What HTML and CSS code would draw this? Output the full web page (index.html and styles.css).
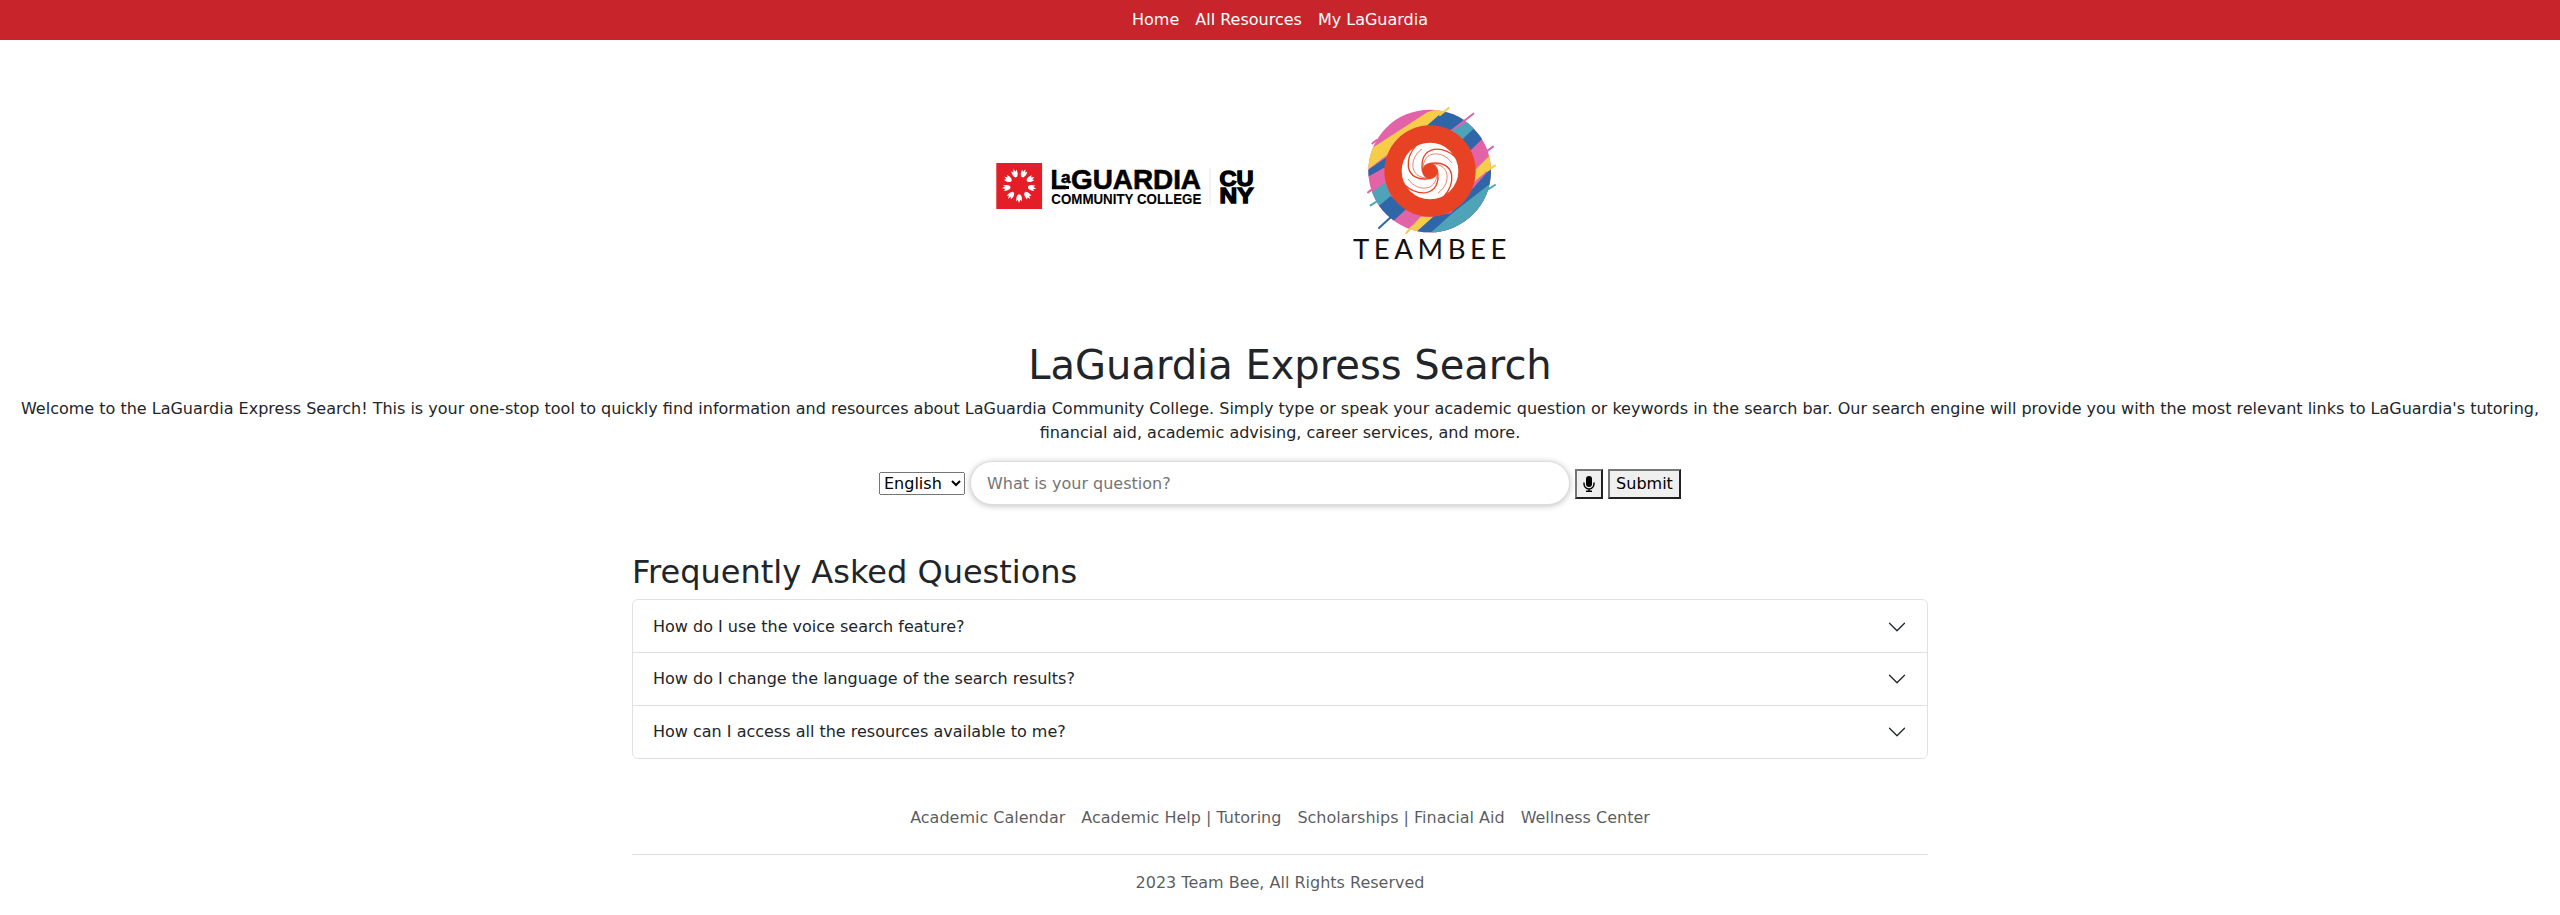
FILE: index.html
```
<!DOCTYPE html>
<html lang="en">
<head>
<meta charset="utf-8">
<title>LaGuardia Express Search</title>
<link rel="stylesheet" href="styles.css">
</head>
<body>
<nav class="topnav">
  <a href="#">Home</a><a href="#">All Resources</a><a href="#">My LaGuardia</a>
</nav>
<header class="logos">
  <svg class="logo-college" viewBox="992 160 268 52" role="img" aria-label="LaGuardia Community College CUNY">
    <rect x="996.3" y="163" width="45.8" height="46" fill="#e31e26"/>
    <defs><path id="petal" d="M-1-9C-3-11-3-13.500-2.600-16L-1.100-14.200L.2-17.400L1.400-14.200L2.800-16C3.200-13.500 3-11 1-9Z" fill="#fff"/></defs>
    <g transform="translate(1019.2 185.500)">
      <use href="#petal" transform="rotate(20)"/><use href="#petal" transform="rotate(60)"/><use href="#petal" transform="rotate(100)"/><use href="#petal" transform="rotate(140)"/><use href="#petal" transform="rotate(180)"/><use href="#petal" transform="rotate(220)"/><use href="#petal" transform="rotate(260)"/><use href="#petal" transform="rotate(300)"/><use href="#petal" transform="rotate(340)"/>
    </g>
    <g class="logo-bold">
      <text x="1050.5" y="188.6" font-size="28" textLength="16" lengthAdjust="spacingAndGlyphs">L</text>
      <text x="1061" y="182.5" font-size="17" textLength="9.5" lengthAdjust="spacingAndGlyphs">a</text>
      <text x="1071" y="188.6" font-size="28" textLength="130" lengthAdjust="spacingAndGlyphs">GUARDIA</text>
      <text class="sub" x="1051.3" y="204" font-size="14.6" textLength="150" lengthAdjust="spacingAndGlyphs">COMMUNITY COLLEGE</text>
      <text class="cuny" x="1219.5" y="185.5" font-size="22" textLength="34" lengthAdjust="spacingAndGlyphs">CU</text>
      <text class="cuny" x="1219.5" y="202.5" font-size="22" textLength="34" lengthAdjust="spacingAndGlyphs">NY</text>
    </g>
    <rect x="1052" y="186" width="17" height="3"/>
    <rect x="1209.5" y="168" width="1.3" height="37" fill="#eee"/>
  </svg>
  <svg class="logo-team" viewBox="1350 100 162 165" role="img" aria-label="Teambee">
    <defs>
      <clipPath id="disc"><circle cx="197" cy="198" r="184"/></clipPath>
      <path id="arm" d="M76-42C54-62 32-67 12-65C-14-60-30-38-22 4"/>
      <path id="thin" d="M66-24C50-46 28-55 6-50C-12-45-23-26-21 0"/>
    </defs>
    <g transform="translate(1364 105) scale(.33333)">
      <g clip-path="url(#disc)">
        <rect width="396" height="396" fill="#e263a8"/>
        <path fill="#f6cd48" d="M0 145L190 22L260 0L215 50L60 157L0 203Z"/>
        <path fill="#2f66a8" d="M0 203L70 155V183L0 222Z"/>
        <path fill="#4fa3b8" d="M0 280L62 233L82 275L30 315Z"/>
        <path fill="#2f66a8" d="M30 315L80 273L127 312L75 360ZM185 65L250 8L304 42L260 75Z"/>
        <path fill="#f6cd48" d="M120 390L170 335H215L155 394Z"/>
        <path fill="#2f66a8" d="M160 378L210 333L260 325L396 172V396H150Z"/>
        <path fill="#4fa3b8" d="M198 385L265 325L396 222V396H190ZM255 82L318 45L335 72L294 108Z"/>
        <path fill="#2f66a8" d="M290 108L328 72L357 100L320 136Z"/>
        <path fill="#f6cd48" d="M328 200L381 148L396 175L326 235Z"/>
      </g>
      <g fill="none" stroke-linecap="round" stroke-width="6">
        <path stroke="#e263a8" d="M300 48L328 26M360 145L387 125M25 115L38 105M12 262L32 248"/>
        <path stroke="#f6cd48" d="M228 30L254 9M370 197L393 182M127 384L145 364"/>
        <path stroke="#2f66a8" d="M45 369L80 337"/>
        <path stroke="#4fa3b8" d="M20 301L40 288M372 253L393 240"/>
      </g>
      <circle cx="198" cy="198" r="137" fill="#e84225"/>
      <circle cx="198" cy="198" r="85" fill="#fff"/>
      <g transform="translate(198 198)" fill="none" stroke="#e84225">
        <g stroke-width="4"><use href="#arm"/><use href="#arm" transform="rotate(90)"/><use href="#arm" transform="rotate(180)"/><use href="#arm" transform="rotate(270)"/></g>
        <g stroke-width="2"><use href="#thin"/><use href="#thin" transform="rotate(90)"/><use href="#thin" transform="rotate(180)"/><use href="#thin" transform="rotate(270)"/></g>
        <circle r="23" fill="#e84225"/>
      </g>
    </g>
    <text class="team-name" x="1353" y="258.5" font-size="27" textLength="158" lengthAdjust="spacingAndGlyphs">TEAMBEE</text>
  </svg>
</header>
<main>
  <section class="intro">
    <h1>LaGuardia Express Search</h1>
    <p>Welcome to the LaGuardia Express Search! This is your one-stop tool to quickly find information and resources about LaGuardia Community College. Simply type or speak your academic question or keywords in the search bar. Our search engine will provide you with the most relevant links to LaGuardia's tutoring, financial aid, academic advising, career services, and more.</p>
  </section>
  <form class="search">
    <select aria-label="Language"><option>English</option></select>
    <input type="text" placeholder="What is your question?">
    <button type="button" class="mic" aria-label="Voice search">
      <svg viewBox="0 0 12 16"><rect x="3" y="0" width="6" height="11" rx="3"/><path d="M1 6.500V8a5 5 0 0 0 10 0V6.500M6 13v2M3 15.200h6" fill="none" stroke="#000" stroke-width="1.400"/></svg>
    </button>
    <button type="button">Submit</button>
  </form>
  <section class="container faq">
    <h2>Frequently Asked Questions</h2>
    <div class="accordion">
      <div class="item"><span>How do I use the voice search feature?</span><svg class="chevron" viewBox="0 0 16 16"><path d="M1.646 4.646a.5.5 0 0 1 .708 0L8 10.293l5.646-5.647a.5.5 0 0 1 .708.708l-6 6a.5.5 0 0 1-.708 0l-6-6a.5.5 0 0 1 0-.708z"/></svg></div>
      <div class="item"><span>How do I change the language of the search results?</span><svg class="chevron" viewBox="0 0 16 16"><path d="M1.646 4.646a.5.5 0 0 1 .708 0L8 10.293l5.646-5.647a.5.5 0 0 1 .708.708l-6 6a.5.5 0 0 1-.708 0l-6-6a.5.5 0 0 1 0-.708z"/></svg></div>
      <div class="item"><span>How can I access all the resources available to me?</span><svg class="chevron" viewBox="0 0 16 16"><path d="M1.646 4.646a.5.5 0 0 1 .708 0L8 10.293l5.646-5.647a.5.5 0 0 1 .708.708l-6 6a.5.5 0 0 1-.708 0l-6-6a.5.5 0 0 1 0-.708z"/></svg></div>
    </div>
  </section>
</main>
<footer class="container footer">
  <div class="links"><a href="#">Academic Calendar</a><a href="#">Academic Help | Tutoring</a><a href="#">Scholarships | Finacial Aid</a><a href="#">Wellness Center</a></div>
  <p>2023 Team Bee, All Rights Reserved</p>
</footer>
</body>
</html>
```
FILE: styles.css
```
*, *::before, *::after { box-sizing: border-box; }
body {
  margin: 0;
  font: 16px/24px "DejaVu Sans", sans-serif;
  color: #212529;
  background: #fff;
}
h1, h2, p { margin: 0; }
h1, h2 { font-weight: 400; line-height: 1.2; }
a { color: inherit; text-decoration: none; }
.topnav {
  display: flex;
  justify-content: center;
  gap: 16px;
  height: 40px;
  padding: 8px 0;
  background: #c8242b;
  color: #fff;
}
.logos {
  display: flex;
  align-items: flex-start;
  gap: 90px;
  height: 301px;
  padding: 60px 0 0 992px;
}
.logo-college { width: 268px; height: 52px; margin-top: 60px; }
.logo-team { width: 162px; height: 165px; }
.logo-bold { font-family: "Liberation Sans", sans-serif; font-weight: 700; stroke: #000; stroke-width: .6px; }
.logo-bold .sub { stroke-width: .1px; }
.logo-bold .cuny { stroke-width: 1.4px; }
.team-name { font-family: Lato, sans-serif; fill: #111; letter-spacing: 4.5px; }
.intro { padding: 0 12px; text-align: center; }
.intro h1 { font-size: 40px; margin-bottom: 8px; padding-left: 20px; }
.search {
  display: flex;
  justify-content: center;
  align-items: center;
  gap: 5px;
  margin-top: 16px;
  height: 44px;
}
.search select, .search input, .search button { font: inherit; margin: 0; }
.search select { width: 86px; height: 23px; line-height: 19px; color: #000; }
.search input {
  width: 600px;
  height: 44px;
  padding: 10px 16px;
  border: 1px solid #ddd;
  border-radius: 24px;
  box-shadow: 0 1px 6px rgba(0, 0, 0, .25);
}
.search button {
  width: 73px;
  height: 30px;
  margin-top: 2px;
  padding: 0;
  border: 2px solid;
  border-color: #767676 #212121 #212121 #767676;
  line-height: 24px;
  background: #efefef;
  color: #000;
}
.search .mic { display: flex; justify-content: center; align-items: center; width: 28px; }
.mic svg { width: 12px; height: 16px; }
.container { width: 1320px; margin: 0 auto; padding: 0 12px; }
.faq { padding-top: 48px; }
.faq h2 { font-size: 32px; margin-bottom: 8px; }
.accordion { border: 1px solid #dee2e6; border-radius: 6px; }
.item { display: flex; align-items: center; justify-content: space-between; height: 52px; padding: 1px 20px 0; }
.item + .item { height: 53px; padding-top: 0; border-top: 1px solid #dee2e6; }
.chevron { width: 20px; height: 20px; fill: #212529; }
.footer { padding-top: 47px; color: rgba(33, 37, 41, .75); }
.links { display: flex; justify-content: center; gap: 16px; height: 49px; border-bottom: 1px solid #dee2e6; }
.footer p { padding-top: 16px; text-align: center; }
```
